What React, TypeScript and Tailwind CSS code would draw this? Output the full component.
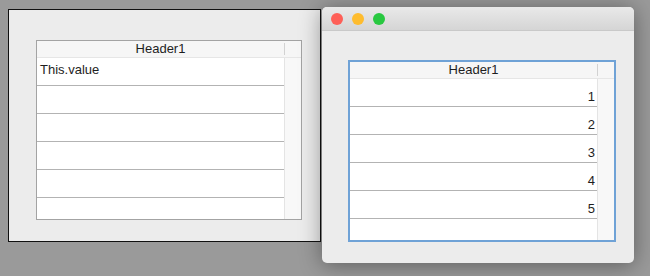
import React from 'react';

type TableProps = {
  rows: string[];
  align: 'left' | 'right';
  focused?: boolean;
};

function Table({ rows, align, focused }: TableProps) {
  return (
    <div
      className={
        focused
          ? 'flex flex-col bg-white border-2 border-[#6fa2d6] w-[268px] h-[182px]'
          : 'flex flex-col bg-white border border-[#a3a3a3] w-[266px] h-[180px]'
      }
    >
      <div className="flex h-[17px] shrink-0 bg-[#f6f6f6] border-b border-[#e6e6e6]">
        <div className="flex-1 flex items-center justify-center text-[13px] leading-4 text-[#1e1e1e]">
          Header1
        </div>
        <div className="w-[17px] flex items-center">
          <div className="w-px h-[12px] bg-[#d2d2d2]" />
        </div>
      </div>
      <div className="flex flex-1 min-h-0">
        <div className="flex-1 flex flex-col">
          {rows.map((r, i) => (
            <div
              key={i}
              className={
                align === 'left'
                  ? 'h-[28px] shrink-0 border-b border-[#b3b3b3] pl-[3px] pt-[4px] text-[13px] leading-4 text-[#1e1e1e]'
                  : 'h-[28px] shrink-0 border-b border-[#b3b3b3] pr-[2px] pb-[1px] flex items-end justify-end text-[13px] leading-4 text-[#1e1e1e]'
              }
            >
              {r}
            </div>
          ))}
          <div className="flex-1" />
        </div>
        <div className="w-[17px] bg-[#f8f8f8] border-l border-[#e4e4e4]" />
      </div>
    </div>
  );
}

export default function App() {
  return (
    <div
      className="w-[650px] h-[276px] bg-[#9a9a9a] flex items-start overflow-hidden"
      style={{ fontFamily: '"Liberation Sans", Arial, sans-serif' }}
    >
      <div className="mt-[9px] ml-[8px] w-[313px] h-[233px] border border-[#111] bg-[#ececec] pt-[30px] pl-[27px]">
        <Table rows={['This.value', '', '', '', '']} align="left" />
      </div>

      <div className="relative z-10 mt-[7px] ml-px w-[312px] h-[256px] rounded-[5px] bg-[#ececec] shadow-[0_2px_22px_rgba(0,0,0,0.4)] overflow-hidden flex flex-col">
        <div className="h-[24px] shrink-0 bg-gradient-to-b from-[#e9e9e9] to-[#d5d5d5] border-b border-[#c9c9c9] flex items-center pl-[9px] gap-[9px]">
          <div className="w-[12px] h-[12px] rounded-full bg-[#fe5f57]" />
          <div className="w-[12px] h-[12px] rounded-full bg-[#febc2e]" />
          <div className="w-[12px] h-[12px] rounded-full bg-[#28c840]" />
        </div>
        <div className="pt-[29px] pl-[26px]">
          <Table rows={['1', '2', '3', '4', '5']} align="right" focused />
        </div>
      </div>
    </div>
  );
}
